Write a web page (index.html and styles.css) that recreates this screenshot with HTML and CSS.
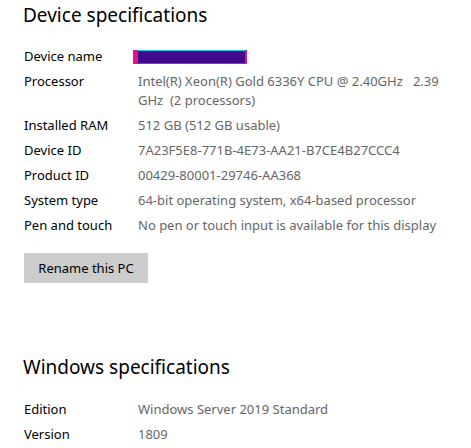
FILE: index.html
```html
<!DOCTYPE html>
<html>
<head>
<meta charset="utf-8">
<link rel="stylesheet" href="styles.css">
</head>
<body>
<div class="page">
  <h2 class="heading">Device specifications</h2>
  <div class="specs">
    <div class="label">Device name</div>
    <div class="value"><span class="redact"><span class="redact-inner"></span></span></div>
    <div class="label">Processor</div>
    <div class="value">Intel(R) Xeon(R) Gold 6336Y CPU @ 2.40GHz&nbsp;&nbsp; 2.39 GHz&nbsp; (2 processors)</div>
    <div class="label">Installed RAM</div>
    <div class="value">512 GB (512 GB usable)</div>
    <div class="label">Device ID</div>
    <div class="value">7A23F5E8-771B-4E73-AA21-B7CE4B27CCC4</div>
    <div class="label">Product ID</div>
    <div class="value">00429-80001-29746-AA368</div>
    <div class="label">System type</div>
    <div class="value">64-bit operating system, x64-based processor</div>
    <div class="label">Pen and touch</div>
    <div class="value">No pen or touch input is available for this display</div>
  </div>
  <button class="rename">Rename this PC</button>
  <h2 class="heading heading-win">Windows specifications</h2>
  <div class="specs specs-win">
    <div class="label">Edition</div>
    <div class="value">Windows Server 2019 Standard</div>
    <div class="label">Version</div>
    <div class="value">1809</div>
  </div>
</div>
</body>
</html>
```
FILE: styles.css
```css
html, body {
  margin: 0;
  padding: 0;
  background: #ffffff;
}
body {
  font-family: "Noto Sans", "Open Sans", sans-serif;
  color: #000;
}
.page {
  padding: 0 0 0 23px;
}
.heading {
  margin: 0;
  padding-top: 2px;
  font-size: 19px;
  font-weight: 400;
  line-height: 27px;
  color: #000;
}
.specs {
  display: grid;
  grid-template-columns: 115px 1fr;
  row-gap: 6px;
  margin-top: 18px;
  font-size: 13px;
  line-height: 19px;
  padding-right: 16px;
}
.specs-win {
  margin-top: 19px;
}
.label {
  color: #000;
  padding-left: 1px;
}
.value {
  color: #666;
}
.redact {
  display: inline-block;
  position: relative;
  width: 114px;
  height: 14px;
  margin-left: -5px;
  margin-top: 3px;
  background: #e6127f;
  vertical-align: top;
}
.redact-inner {
  position: absolute;
  left: 5px;
  right: 2px;
  top: 0;
  bottom: 1px;
  background: #3f0a8e;
  border-top: 1px solid #22c4f0;
}
.rename {
  display: block;
  margin: 18px 0 0 1px;
  width: 124px;
  height: 30px;
  border: none;
  background: #cccccc;
  font-family: inherit;
  font-size: 13px;
  color: #000;
  padding: 0;
}
.heading-win {
  margin-top: 69px;
}
```
